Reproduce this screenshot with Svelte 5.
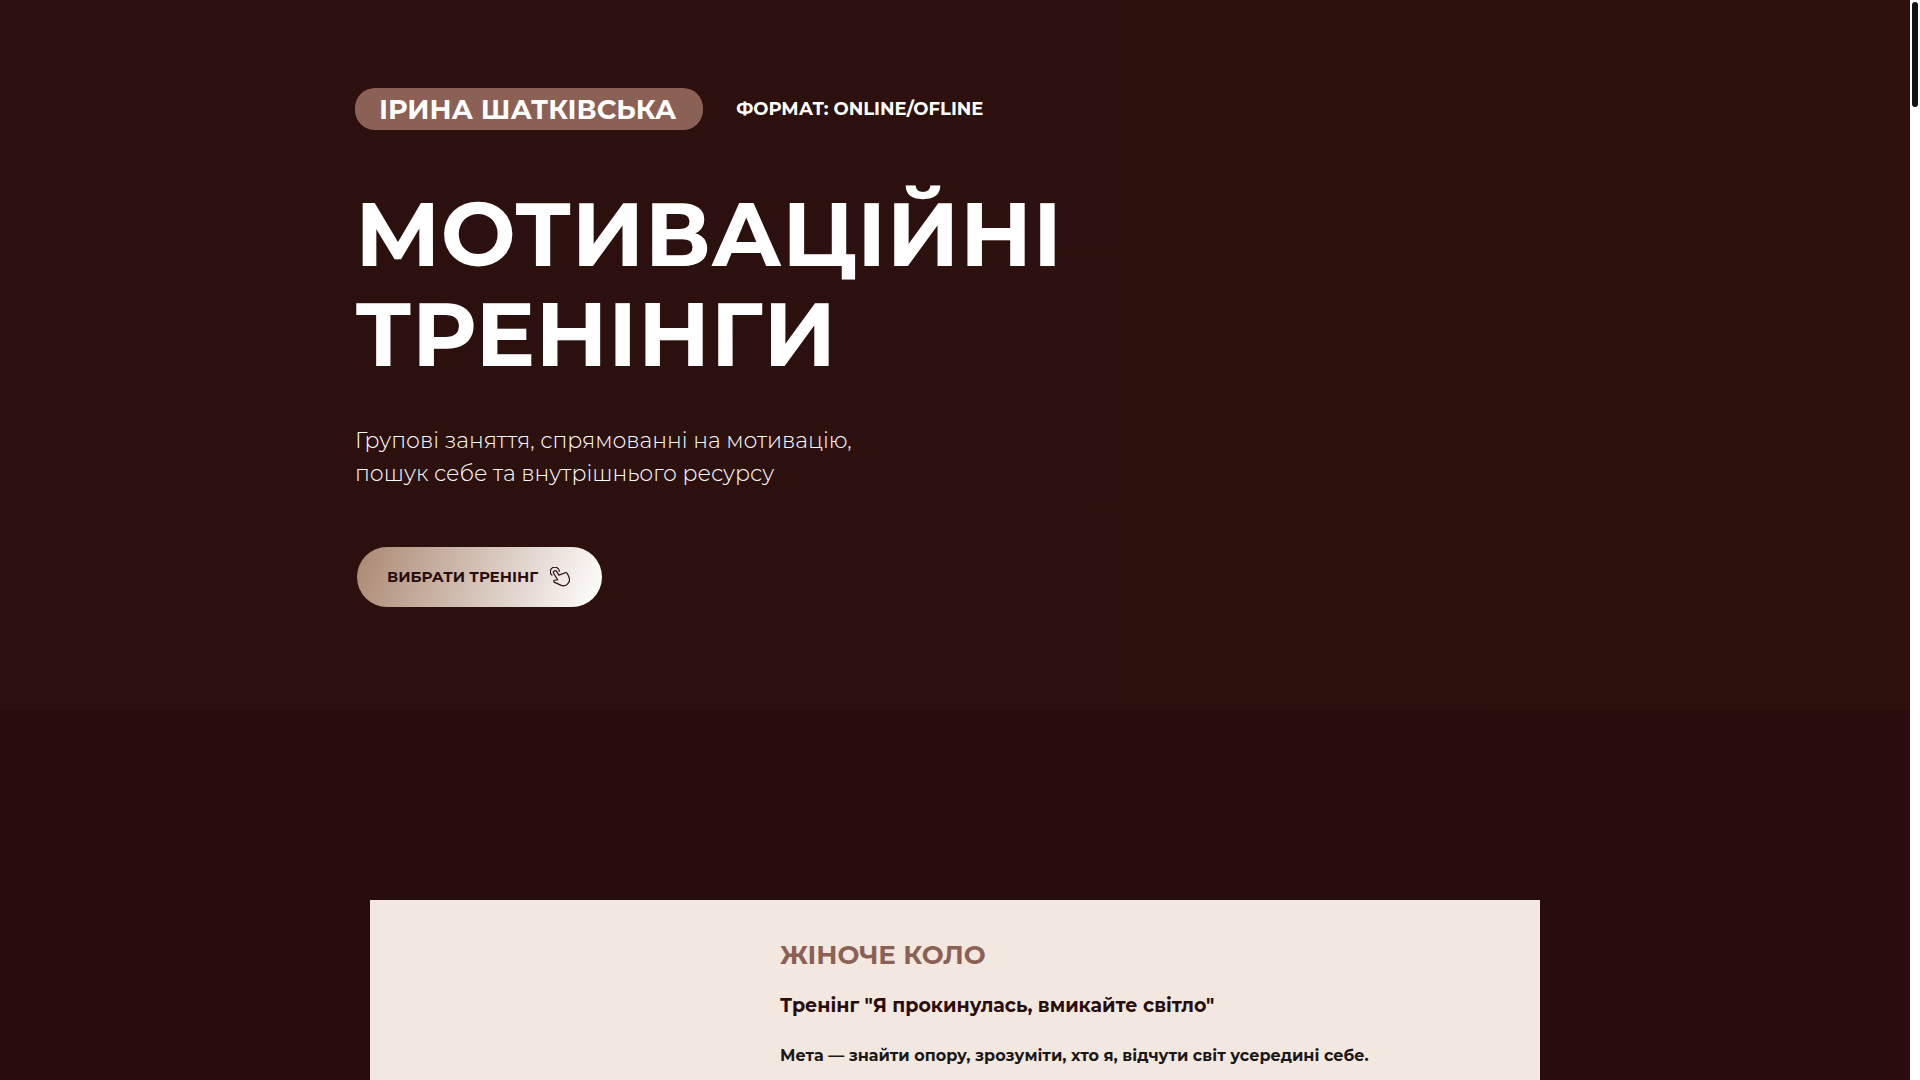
<script>
  const hero = {
    name: 'ІРИНА ШАТКІВСЬКА',
    format: 'ФОРМАТ: ONLINE/OFLINE',
    action: 'ВИБРАТИ ТРЕНІНГ',
  };
  const training = {
    title: 'ЖІНОЧЕ КОЛО',
    topic: 'Тренінг "Я прокинулась, вмикайте світло"',
    goal: 'Мета — знайти опору, зрозуміти, хто я, відчути світ усередині себе.',
  };
</script>

<div class="shell">
  <main class="page">
    <section class="hero">
      <div class="container">
        <div class="intro">
          <span class="name">{hero.name}</span>
          <span class="format">{hero.format}</span>
        </div>
        <h1>МОТИВАЦІЙНІ<br />ТРЕНІНГИ</h1>
        <p class="lead">Групові заняття, спрямованні на мотивацію,<br />пошук себе та внутрішнього ресурсу</p>
        <button class="action" type="button">
          {hero.action}
          <svg viewBox="0 0 20 20" aria-hidden="true">
            <path d="M2 8.100A4.500 4.500 0 1 1 9.300 4.500" />
            <path d="M7.600 12.800 3.600 6.300a1.700 1.700 0 0 1 3-1.700l2.300 3.500 6.200-2.300c1.100-.4 2 .2 2.500 1.100l1.300 3c1.400 3.800 0 6.500-2.100 7.900-1.900 1.200-3.900 1.200-5.500.6l-6.700-3c-1.400-.8-.9-2.400.5-2.400z" />
          </svg>
        </button>
      </div>
    </section>

    <section class="trainings">
      <article class="card">
        <div class="details">
          <h2>{training.title}</h2>
          <h3>{training.topic}</h3>
          <p>{training.goal}</p>
        </div>
      </article>
    </section>
  </main>
  <div class="track" aria-hidden="true"><div class="thumb"></div></div>
</div>

<style>
  :global(body) {
    margin: 0;
    background: #290d0d;
    font-family: Montserrat, Inter, "Noto Sans", sans-serif;
  }

  .shell {
    display: grid;
    grid-template-columns: minmax(0, 1fr) 10px;
    height: 100vh;
    overflow: hidden;
  }

  .page {
    display: flex;
    flex-direction: column;
    overflow: hidden;
  }

  .hero {
    flex: none;
    padding: 88px 20px 103px;
    background: linear-gradient(90deg, #2c100e, #2c110d);
    color: #fff;
  }

  .container {
    max-width: 1200px;
    margin: 0 auto;
  }

  .intro {
    display: flex;
    align-items: center;
    gap: 33px;
  }

  .name {
    padding: 1px 27px 0 24px;
    border-radius: 20px;
    background: #8b6055;
    font-size: 27px;
    line-height: 41px;
    font-weight: 700;
  }

  .format {
    font-size: 18px;
    line-height: 28px;
    font-weight: 700;
  }

  h1 {
    margin: 54px 0 0;
    font-size: 89px;
    line-height: 100px;
    font-weight: 700;
  }

  .lead {
    margin: 40px 0 0;
    font-size: 22px;
    line-height: 33px;
    font-weight: 300;
  }

  .action {
    display: flex;
    align-items: center;
    gap: 12px;
    height: 60px;
    margin: 57px 0 0 2px;
    padding: 0 32px 0 30px;
    border: 0;
    border-radius: 30px;
    background: linear-gradient(110deg, #ab8872, #fff);
    color: #290d0d;
    font: inherit;
    font-size: 15px;
    line-height: 24px;
    font-weight: 700;
    cursor: pointer;
  }

  .action svg {
    width: 20px;
    height: 20px;
    fill: none;
    stroke: currentColor;
    stroke-width: 1.2;
    stroke-linecap: round;
    stroke-linejoin: round;
  }

  .trainings {
    flex: none;
    padding: 190px 20px 0;
  }

  .card {
    box-sizing: border-box;
    max-width: 1170px;
    min-height: 480px;
    margin: 0 auto;
    padding: 35px 60px 60px 410px;
    background: #f3e8df;
  }

  h2 {
    margin: 0;
    color: #8b6055;
    font-size: 26px;
    line-height: 40px;
    font-weight: 700;
  }

  h3 {
    margin: 16px 0 0;
    color: #290d0d;
    font-size: 19px;
    line-height: 30px;
    font-weight: 700;
  }

  .details p {
    margin: 22px 0 0;
    color: #191717;
    font-size: 16px;
    line-height: 26px;
    font-weight: 700;
  }

  .track {
    padding: 2px;
    background: #fff;
  }

  .thumb {
    height: 105px;
    border-radius: 3px;
    background: #111;
  }
</style>
